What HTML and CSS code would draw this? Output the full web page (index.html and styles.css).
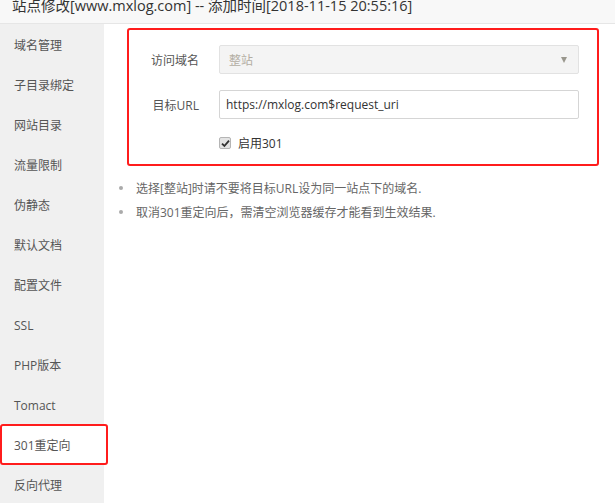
FILE: index.html
```
<!DOCTYPE html>
<html lang="zh-CN">
<head>
    <meta charset="UTF-8">
    <title>站点修改</title>
    <link rel="stylesheet" href="styles.css">
</head>
<body>
    <div class="title">站点修改[www.mxlog.com] -- 添加时间[2018-11-15 20:55:16]</div>

    <div class="layout">
        <ul class="side-menu">
            <li>域名管理</li>
            <li>子目录绑定</li>
            <li>网站目录</li>
            <li>流量限制</li>
            <li>伪静态</li>
            <li>默认文档</li>
            <li>配置文件</li>
            <li>SSL</li>
            <li>PHP版本</li>
            <li>Tomact</li>
            <li class="active">301重定向</li>
            <li>反向代理</li>
        </ul>

        <div class="content">
            <div class="form-box">
                <div class="form-row">
                    <label class="form-label">访问域名</label>
                    <div class="select-box">
                        <span>整站</span>
                        <span class="arrow"></span>
                    </div>
                </div>
                <div class="form-row">
                    <label class="form-label">目标URL</label>
                    <input class="text-input" type="text" value="https://mxlog.com$request_uri">
                </div>
                <div class="check-row">
                    <span class="check-box">
                        <svg width="9" height="9" viewBox="0 0 9 9"><path d="M1 4.6 L3.4 7 L8 1.6" fill="none" stroke="#333" stroke-width="1.8"/></svg>
                    </span>
                    <span>启用301</span>
                </div>
            </div>

            <ul class="tips">
                <li>选择[整站]时请不要将目标URL设为同一站点下的域名.</li>
                <li>取消301重定向后，需清空浏览器缓存才能看到生效结果.</li>
            </ul>
        </div>
    </div>
</body>
</html>
```

FILE: styles.css
```
body {
    margin: 0;
    font-family: "Open Sans", "Noto Sans CJK SC", sans-serif;
    font-size: 12px;
    color: #333;
    background-color: white;
    overflow: hidden;
}
.title {
    height: 23px;
    line-height: 11px;
    padding-left: 12px;
    font-size: 14.5px;
    color: #333;
    background-color: #f8f8f8;
    border-bottom: 1px solid #e6e6e6;
    overflow: hidden;
}
.layout {
    display: flex;
}
.side-menu {
    width: 104px;
    margin: 0;
    padding: 0;
    list-style: none;
    background-color: #f0f0f0;
}
.side-menu li {
    height: 36px;
    line-height: 36px;
    padding-top: 4px;
    padding-left: 14px;
    color: #555;
}
.side-menu li.active {
    position: relative;
    background-color: white;
}
.side-menu li.active::after {
    content: "";
    position: absolute;
    left: 0;
    top: 0;
    width: 104px;
    height: 37px;
    border: 2px solid #ff1c1c;
    border-radius: 3px;
}
.content {
    flex: 1;
    padding-top: 4px;
}
.form-box {
    width: 472px;
    height: 138px;
    box-sizing: border-box;
    margin-left: 23px;
    padding-top: 15px;
    border: 2px solid #ff1c1c;
    border-radius: 3px;
}
.form-row {
    display: flex;
    align-items: center;
    margin-bottom: 16px;
}
.form-label {
    width: 70px;
    padding-right: 20px;
    text-align: right;
    color: #555;
}
.select-box {
    display: flex;
    align-items: center;
    justify-content: space-between;
    width: 360px;
    height: 29px;
    box-sizing: border-box;
    padding: 0 9px;
    color: #b3aea3;
    background-color: #f4f4f4;
    border: 1px solid #e2e2e2;
    border-radius: 2px;
}
.arrow {
    width: 0;
    height: 0;
    border-left: 3px solid transparent;
    border-right: 3px solid transparent;
    border-top: 6px solid #99978d;
    margin-right: 2px;
}
.text-input {
    width: 360px;
    height: 29px;
    box-sizing: border-box;
    padding: 0 6px;
    font-family: inherit;
    font-size: 12px;
    color: #333;
    border: 1px solid #d5d5d5;
    border-radius: 2px;
    outline: none;
}
.check-row {
    display: flex;
    align-items: center;
    margin-left: 90px;
    margin-top: -1px;
}
.check-box {
    display: flex;
    align-items: center;
    justify-content: center;
    width: 10px;
    height: 10px;
    margin-right: 7px;
    background-color: #e4e4e4;
    border: 1px solid #b5b5b5;
    border-radius: 2px;
}
.tips {
    margin: 10px 0 0;
    padding: 0;
    list-style: none;
    color: #666;
}
.tips li {
    display: flex;
    align-items: center;
    height: 24px;
    padding-left: 15px;
}
.tips li::before {
    content: "";
    width: 4px;
    height: 4px;
    margin-right: 13px;
    border-radius: 50%;
    background-color: #aaa;
}
```
